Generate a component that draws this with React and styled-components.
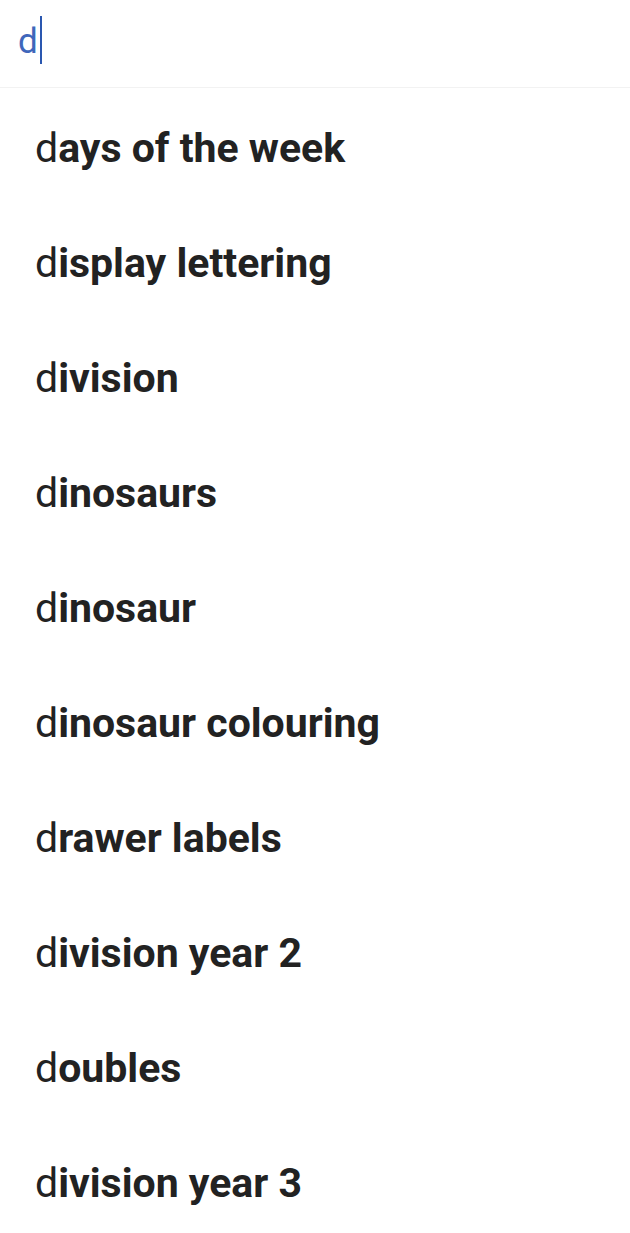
import styled, { createGlobalStyle } from "styled-components";

const GlobalStyle = createGlobalStyle`
  html, body {
    margin: 0;
    padding: 0;
    background: #ffffff;
    font-family: Roboto, "Noto Sans", sans-serif;
  }
`;

const Wrapper = styled.div`
  width: 630px;
  background: #fff;
`;

const SearchBar = styled.div`
  height: 88px;
  display: flex;
  align-items: center;
  padding-left: 18px;
  border-bottom: 1px solid #f2f2f2;
  box-sizing: border-box;
`;

const Typed = styled.span`
  font-size: 35px;
  color: #3f67bb;
  line-height: 1;
  margin-top: -4px;
`;

const Caret = styled.span`
  display: inline-block;
  width: 2px;
  height: 48px;
  background: #2a57b0;
  margin-left: 2px;
  margin-top: -8px;
`;

const List = styled.ul`
  list-style: none;
  margin: 0;
  padding: 0;
`;

const Suggestion = styled.li`
  height: 115px;
  display: flex;
  align-items: center;
  padding-left: 35px;
  padding-top: 4px;
  box-sizing: border-box;
  font-size: 41px;
  color: #222222;
  white-space: nowrap;
`;

const Match = styled.span`
  font-weight: 400;
`;

const Rest = styled.span`
  font-weight: 700;
`;

const items = [
  "days of the week",
  "display lettering",
  "division",
  "dinosaurs",
  "dinosaur",
  "dinosaur colouring",
  "drawer labels",
  "division year 2",
  "doubles",
  "division year 3",
];

export default function App() {
  const query = "d";
  return (
    <Wrapper>
      <GlobalStyle />
      <SearchBar>
        <Typed>{query}</Typed>
        <Caret />
      </SearchBar>
      <List>
        {items.map((item) => (
          <Suggestion key={item}>
            <Match>{item.slice(0, query.length)}</Match>
            <Rest>{item.slice(query.length)}</Rest>
          </Suggestion>
        ))}
      </List>
    </Wrapper>
  );
}
